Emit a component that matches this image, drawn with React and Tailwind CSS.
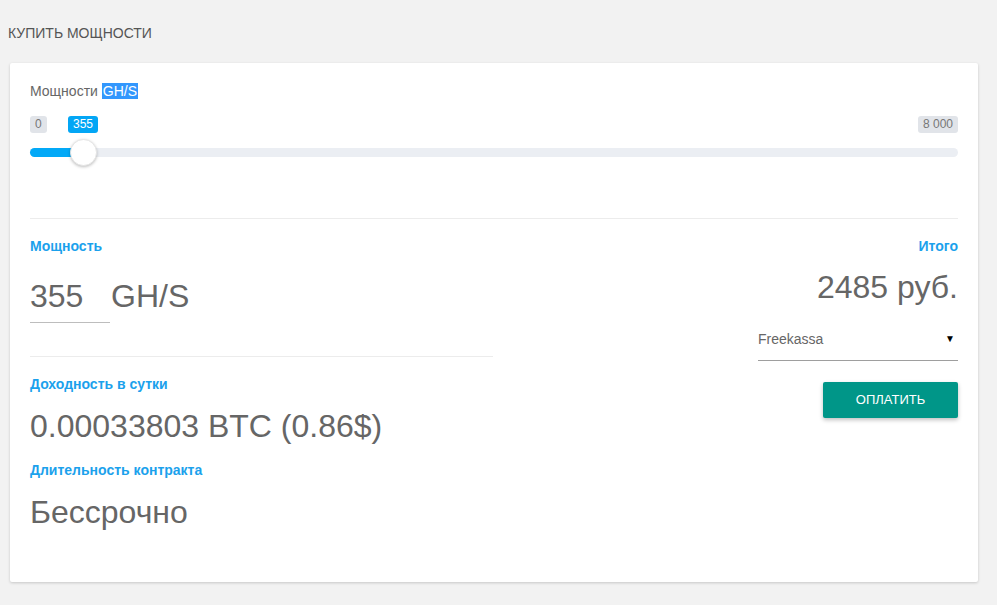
import React from 'react'

const font = { fontFamily: '"Liberation Sans", Arial, sans-serif' }

const Label = ({ children, right }) => (
  <div className={`text-[14px] leading-[18px] font-bold text-[#1ba1ec] ${right ? 'text-right' : ''}`}>
    {children}
  </div>
)

export default function App() {
  return (
    <div style={font} className="min-h-[605px] bg-[#f2f2f2] pl-[10px] pr-[19px] pt-[24px] pb-[24px]">
      <div className="ml-[-2px] text-[14px] leading-[18px] text-[#555]">КУПИТЬ МОЩНОСТИ</div>

      <div className="mt-[21px] bg-white rounded-[2px] shadow-[0_1px_3px_rgba(0,0,0,0.18)] px-[20px] pt-[19px] pb-[52px]">
        {/* slider section */}
        <div className="text-[14px] leading-[18px] text-[#666]">
          Мощности <span className="bg-[#3297fd] text-white px-[1px]">GH/S</span>
        </div>

        <div className="relative mt-[16px] h-[17px] flex justify-between">
          <span className="h-[17px] px-[5px] rounded-[3px] bg-[#e1e4e9] text-[12px] leading-[17px] text-[#777]">0</span>
          <span className="absolute left-[38px] top-0 h-[17px] w-[30px] text-center rounded-[3px] bg-[#03a6f5] text-[12px] leading-[17px] text-white">355</span>
          <span className="h-[17px] px-[5px] rounded-[3px] bg-[#e1e4e9] text-[12px] leading-[17px] text-[#777]">8 000</span>
        </div>

        <div className="relative mt-[15px] h-[9px] rounded-full bg-[#ebeef3]">
          <div className="h-[9px] w-[53px] rounded-full bg-[#03a9f7]" />
          <div className="absolute left-[40px] top-[-9px] w-[27px] h-[27px] rounded-full bg-white border border-[#e6e6e6] shadow-[0_1px_3px_rgba(0,0,0,0.25)]" />
        </div>

        <div className="mt-[61px] h-px bg-[#ececec]" />

        {/* details */}
        <div className="mt-[18px] flex justify-between">
          <div className="w-[463px]">
            <Label>Мощность</Label>
            <div className="mt-[21px] flex items-start">
              <div className="w-[80px] border-b border-[#bdbdbd] pb-[6px] text-[32px] leading-[40px] text-[#666]">355</div>
              <div className="ml-[1px] text-[32px] leading-[40px] text-[#666]">GH/S</div>
            </div>
            <div className="mt-[33px] h-px bg-[#ececec]" />
            <div className="mt-[18px]"><Label>Доходность в сутки</Label></div>
            <div className="mt-[15px] text-[32px] leading-[36px] text-[#666]">0.00033803 BTC (0.86$)</div>
            <div className="mt-[17px]"><Label>Длительность контракта</Label></div>
            <div className="mt-[15px] text-[32px] leading-[36px] text-[#666]">Бессрочно</div>
          </div>

          <div className="flex flex-col items-end">
            <Label right>Итого</Label>
            <div className="mt-[14px] text-[32px] leading-[36px] text-[#666]">2485 руб.</div>
            <div className="mt-[25px] w-[200px] flex justify-between items-center border-b border-[#9e9e9e] pb-[12px]">
              <span className="text-[14px] leading-[18px] text-[#666]">Freekassa</span>
              <span className="text-[10px] leading-[18px] text-black mr-[3px]">▼</span>
            </div>
            <button className="mt-[21px] w-[135px] h-[36px] rounded-[2px] bg-[#009688] text-white text-[13px] shadow-[0_2px_4px_rgba(0,0,0,0.25)]">
              ОПЛАТИТЬ
            </button>
          </div>
        </div>
      </div>
    </div>
  )
}
